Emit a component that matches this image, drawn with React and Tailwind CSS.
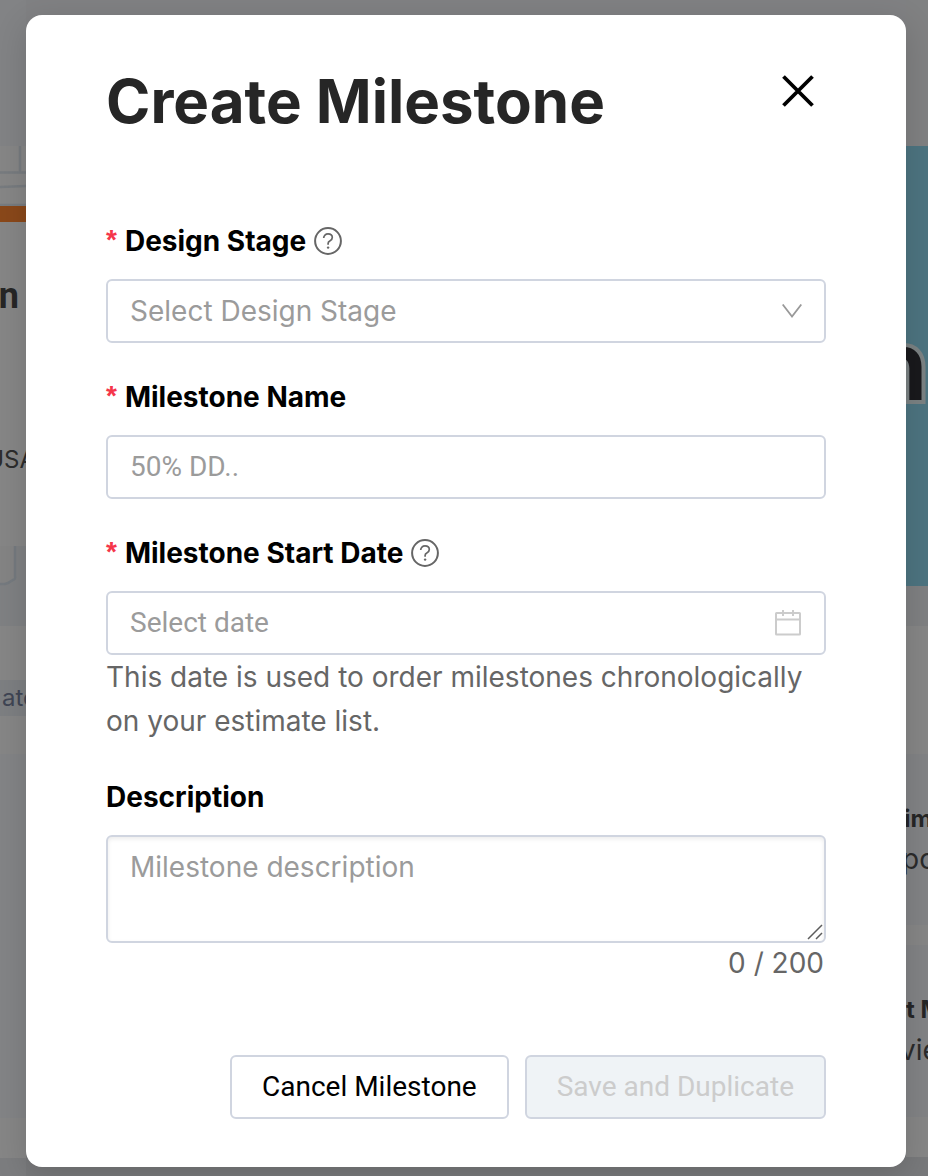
import { useState } from "react";

const control =
  "block w-full rounded-md border-2 border-[#d0d5e0] bg-white text-[28px] text-black outline-none placeholder:text-[#9b9b9b]";

function HelpIcon({ label }) {
  return (
    <button type="button" aria-label={label} className="ml-2 block size-7 text-[#666666]">
      <svg viewBox="0 0 28 28" className="size-7" fill="none" stroke="currentColor" strokeWidth="2">
        <circle cx="14" cy="14" r="12.9" />
        <path d="M9.7 11.1c0-2.6 1.9-4.2 4.3-4.2 2.5 0 4.3 1.5 4.3 3.7 0 1.9-1.1 2.8-2.5 3.5-1.2.6-1.7 1.2-1.7 2.3v1.4" strokeWidth="1.7" />
        <circle cx="14.1" cy="20.6" r="1.2" fill="currentColor" stroke="none" />
      </svg>
    </button>
  );
}

function Label({ htmlFor, required, help, children }) {
  return (
    <div className="mb-4 flex items-center">
      <label htmlFor={htmlFor} className="flex text-[28px] leading-11 font-bold text-black">
        {required && (
          <span aria-hidden="true" className="mr-2 font-['Liberation_Sans',sans-serif] text-[28px] leading-[42px] font-bold text-[#f5364a]">
            *
          </span>
        )}
        {children}
      </label>
      {help && <HelpIcon label={help} />}
    </div>
  );
}

function LeftStrip() {
  return (
    <div aria-hidden="true" className="flex flex-col overflow-hidden bg-[#868686] whitespace-nowrap">
      <div className="h-[146px] shrink-0 bg-[#828385]" />
      <svg viewBox="0 0 26 60" className="h-15 w-full shrink-0" fill="none" stroke="#777b7f" strokeWidth="2.5">
        <path d="M20 0v26M0 26.500h26M0 41l26-1M0 59h26" />
      </svg>
      <div className="h-4 shrink-0 bg-[#8a481a]" />
      <div className="flex h-[324px] shrink-0 flex-col items-end pt-14">
        <span className="pr-[7px] font-['Roboto',sans-serif] text-[36px] leading-9 font-bold text-[#262626]">n</span>
        <span className="mt-[130px] -mr-2.5 text-[24px] leading-8 text-[#2c2c2c]">USA</span>
      </div>
      <svg viewBox="0 0 26 80" className="h-20 w-full shrink-0 bg-[#7f8183]" fill="none">
        <path d="M0 0h15v32l-9 5H0z" fill="#848484" />
        <path d="M15 0v30q1 3-2 4l-5 3-3 1H0" stroke="#757a7f" strokeWidth="2.500" />
      </svg>
      <div className="mt-[54px] h-9 shrink-0 bg-[#7d7f82] pl-0.5 text-[24px] leading-9 text-[#3f4554]">ate</div>
      <div className="mt-[38px] h-[364px] shrink-0 bg-[#838486]" />
      <div className="mt-10 grow bg-[#7c7d7f]" />
    </div>
  );
}

function RightStrip() {
  return (
    <div aria-hidden="true" className="flex flex-col overflow-hidden bg-[#868686] whitespace-nowrap">
      <div className="h-[146px] shrink-0 bg-[#808182]" />
      <div className="flex h-[440px] shrink-0 justify-end bg-[#4d7480] pt-[161px]">
        <span className="text-[96px] leading-[116px] font-semibold text-[#19191c] [-webkit-text-stroke:8px_#7b8283] [paint-order:stroke_fill]">
          n
        </span>
      </div>
      <div className="h-10 shrink-0 bg-[#7f8082]" />
      <div className="mt-32 flex h-[171px] shrink-0 flex-col bg-[#828385] pt-[45px]">
        <span className="-ml-0.5 text-[24px] leading-10 font-bold text-[#262626]">im</span>
        <span className="-ml-1 text-[28px] leading-10 text-[#2b2b2b]">po</span>
      </div>
      <div className="mt-5 flex h-[172px] shrink-0 flex-col bg-[#828385] pt-[45px]">
        <span className="text-[24px] leading-10 font-bold text-[#262626]">t M</span>
        <span className="-ml-1.5 text-[28px] leading-10 text-[#2b2b2b]">vie</span>
      </div>
      <div className="mt-10 grow bg-[#78797b]" />
    </div>
  );
}

export default function App() {
  const [description, setDescription] = useState("");

  return (
    <div className="grid min-h-screen grid-cols-[26px_minmax(0,1fr)_22px] bg-[#78797b] font-['Inter',sans-serif]">
      <LeftStrip />
      <div className="relative z-10 bg-[#808183] pt-[15px] pb-[9px]">
        <div className="absolute inset-x-0 bottom-0 h-10 bg-[#78797b]" />
        <form
          role="dialog"
          aria-labelledby="dialog-title"
          onSubmit={(e) => e.preventDefault()}
          className="relative rounded-2xl bg-white px-20 pt-[50px] pb-12 shadow-[0_8px_32px_rgba(0,0,0,0.15)]"
        >
          <header className="mb-[82px] flex items-start justify-between">
            <h1 id="dialog-title" className="text-[60px] leading-[72px] font-bold text-[#262626]">
              Create Milestone
            </h1>
            <button type="button" aria-label="Close" className="mt-2.5 mr-3 block size-8 text-black">
              <svg viewBox="0 0 32 32" className="size-8" fill="none" stroke="currentColor" strokeWidth="3.800">
                <path d="M1.500 1.500l29 29M30.500 1.500L1.500 30.500" />
              </svg>
            </button>
          </header>

          <div className="flex flex-col gap-8">
            <div>
              <Label htmlFor="stage" required help="About design stage">
                Design Stage
              </Label>
              <div className="relative">
                <select
                  id="stage"
                  defaultValue=""
                  className={`${control} h-16 appearance-none px-[22px] !text-[#9b9b9b]`}
                >
                  <option value="">Select Design Stage</option>
                </select>
                <svg
                  viewBox="0 0 20 14"
                  className="pointer-events-none absolute top-[25px] right-6 h-3.5 w-5"
                  fill="none"
                  stroke="#999999"
                  strokeWidth="1.800"
                >
                  <path d="M.7.5L10 12.500 19.300.5" />
                </svg>
              </div>
            </div>

            <div>
              <Label htmlFor="name" required>
                Milestone Name
              </Label>
              <input id="name" type="text" placeholder="50% DD.." className={`${control} h-16 px-[22px] pb-0.5 font-['Roboto',sans-serif]`} />
            </div>

            <div>
              <Label htmlFor="date" required help="About milestone start date">
                Milestone Start Date
              </Label>
              <div className="relative">
                <input id="date" type="text" placeholder="Select date" className={`${control} h-16 px-[22px] pb-0.5 font-['Roboto',sans-serif]`} />
                <svg
                  viewBox="0 0 26 26"
                  className="pointer-events-none absolute top-[19px] right-[25px] size-[26px]"
                  fill="none"
                  stroke="#cccccc"
                  strokeWidth="2"
                >
                  <rect x="1" y="3" width="24" height="21.500" rx="0.500" />
                  <path d="M1 9.500h24M8 0v6M18 0v6" />
                </svg>
              </div>
              <p className="text-[28px] leading-11 text-[#666666]">
                This date is used to order milestones chronologically on your estimate list.
              </p>
            </div>

            <div>
              <Label htmlFor="description">Description</Label>
              <div className="relative">
                <textarea
                  id="description"
                  maxLength={200}
                  value={description}
                  onChange={(e) => setDescription(e.target.value)}
                  placeholder="Milestone description"
                  className={`${control} h-[108px] resize-none px-[22px] py-2 leading-11 shadow-[inset_0_2px_4px_rgba(0,0,0,0.08)]`}
                />
                <svg
                  viewBox="0 0 16 16"
                  className="pointer-events-none absolute right-[3px] bottom-[3px] size-4"
                  stroke="#5c5c5c"
                  strokeWidth="1.500"
                >
                  <path d="M1 15L15 1M9 15l6-6" />
                </svg>
              </div>
              <p className="pr-0.5 text-right text-[28px] leading-10 text-[#666666]">{description.length} / 200</p>
            </div>
          </div>

          <footer className="mt-[72px] flex justify-end gap-4 font-['Roboto',sans-serif] text-[28px]">
            <button type="button" className="h-16 rounded-md border-2 border-[#d0d5e0] bg-white px-[30px] text-black">
              Cancel Milestone
            </button>
            <button type="submit" disabled className="h-16 rounded-md border-2 border-[#d0d5e0] bg-[#eff3f6] px-[30px] text-[#cccccc]">
              Save and Duplicate
            </button>
          </footer>
        </form>
      </div>
      <RightStrip />
    </div>
  );
}
